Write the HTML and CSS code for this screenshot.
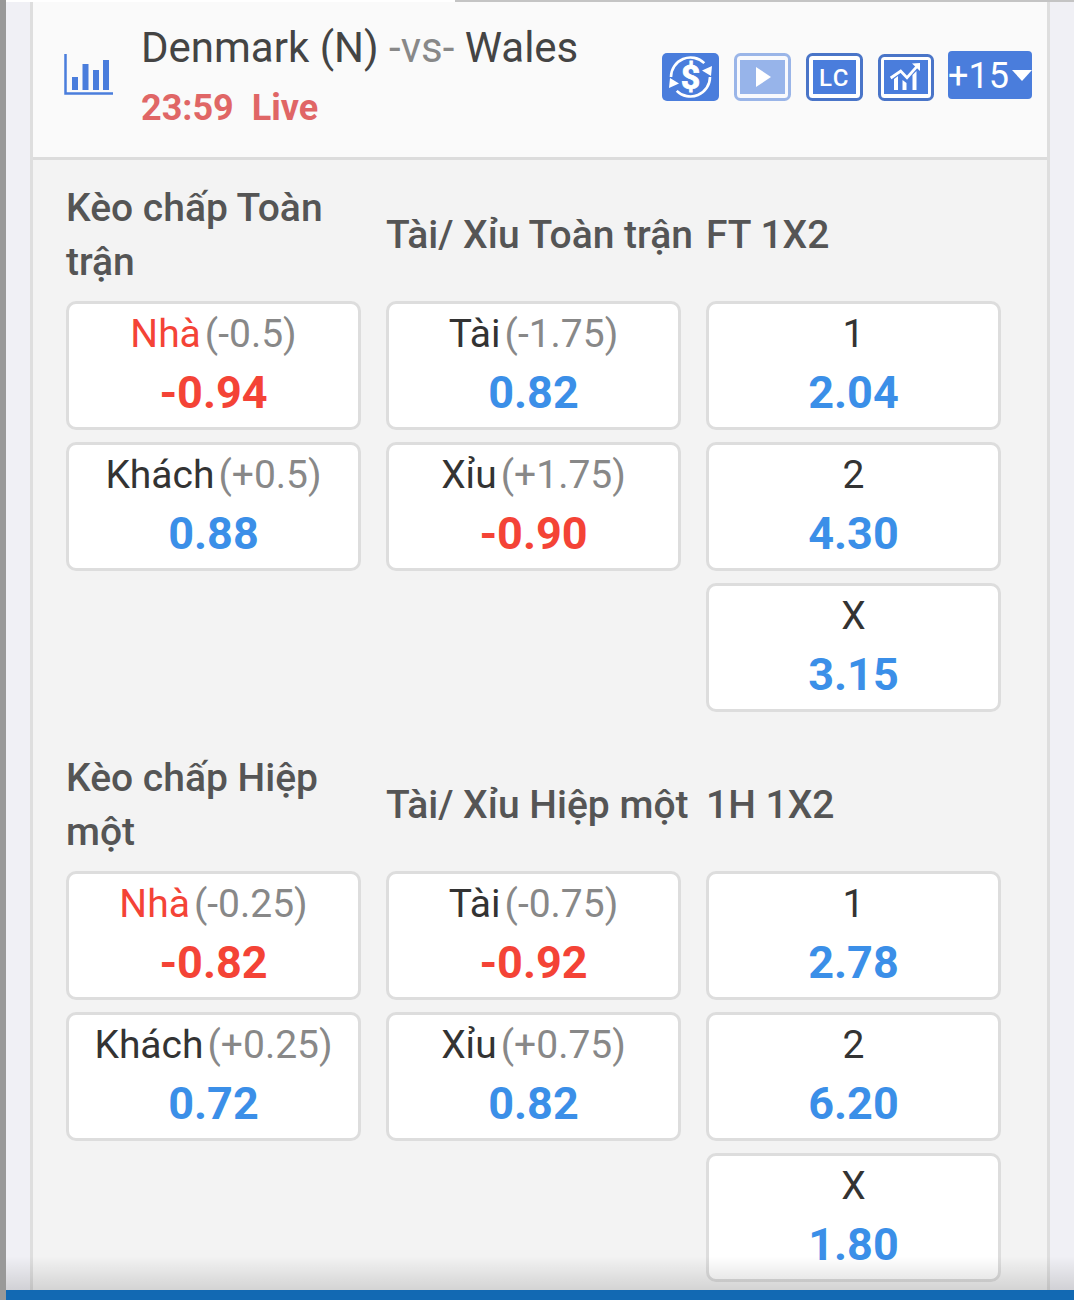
FILE: index.html
```html
<!DOCTYPE html>
<html lang="vi">
<head>
<meta charset="utf-8">
<title>Denmark vs Wales</title>
<link rel="stylesheet" href="styles.css">
</head>
<body>
<div class="screen">
  <div class="viewport">
    <div class="topline"><span class="topline-a"></span><span class="topline-b"></span></div>
    <main class="panel">
      <header class="match">
        <svg class="stats" viewBox="0 0 50 42" width="50" height="42"><path d="M1.500 0V39.500H49" fill="none" stroke="#4a7ddc" stroke-width="2.500"/><path d="M8 23h6v13H8zM18.500 10h6v26h-6zM29 16h6v20h-6zM39 6h6v30h-6z" fill="#4a7ddc"/></svg>
        <div class="teams">
          <div class="title">Denmark (N) <span class="vs">-vs-</span> Wales</div>
          <div class="status">23:59 &nbsp;Live</div>
        </div>
        <div class="tools">
          <svg class="tool" viewBox="0 0 57 48" width="57" height="48"><rect width="57" height="48" rx="5" fill="#4a7ddc"/><path d="M9 24A19.500 19.500 0 0 1 42.300 10.200M48 24A19.500 19.500 0 0 1 14.700 37.800" fill="none" stroke="#fff" stroke-width="2.600"/><path d="M50 13l-1 10-9-5.500zM7 35l1-10 9 5.500z" fill="#fff"/><text x="28.500" y="36" class="dollar">$</text></svg>
          <svg class="tool" viewBox="0 0 57 48" width="57" height="48"><rect x="1.500" y="1.500" width="54" height="45" rx="5" fill="#f8f9fd" stroke="#9ab5e8" stroke-width="3"/><rect x="6" y="7" width="45" height="34" fill="#97b4ea"/><path d="M22 14l15 10-15 10z" fill="#fff"/></svg>
          <svg class="tool" viewBox="0 0 57 48" width="57" height="48"><rect x="1.500" y="1.500" width="54" height="45" rx="5" fill="#fff" stroke="#4a75c8" stroke-width="3"/><rect x="7" y="7" width="43" height="34" fill="#4a7ddc"/><text x="28.500" y="32.500" class="lc">LC</text></svg>
          <svg class="tool tool-trend" viewBox="0 0 56 47" width="56" height="47"><rect x="1.500" y="1.500" width="53" height="44" rx="5" fill="#fff" stroke="#4a75c8" stroke-width="3"/><rect x="6" y="6" width="44" height="34" fill="#4a7ddc"/><path d="M12.700 24l10-7 6.300 6.700 10-11.400" fill="none" stroke="#fff" stroke-width="2.800"/><path d="M34 9.500l8-.5v8zM16 36V25l4-3v14zM24.500 36V26l4 3v7zM34.500 36V21l4-4v19z" fill="#fff"/></svg>
          <div class="more">+15<span class="caret"></span></div>
        </div>
      </header>

      <section class="market">
        <div class="market-grid">
          <h2 class="heading">Kèo chấp Toàn trận</h2>
          <h2 class="heading">Tài/ Xỉu Toàn trận</h2>
          <h2 class="heading">FT 1X2</h2>
          <div class="col">
            <div class="card"><div class="label"><span class="name home">Nhà</span><span class="line">(-0.5)</span></div><div class="odd neg">-0.94</div></div>
            <div class="card"><div class="label"><span class="name">Khách</span><span class="line">(+0.5)</span></div><div class="odd">0.88</div></div>
          </div>
          <div class="col">
            <div class="card"><div class="label"><span class="name">Tài</span><span class="line">(-1.75)</span></div><div class="odd">0.82</div></div>
            <div class="card"><div class="label"><span class="name">Xỉu</span><span class="line">(+1.75)</span></div><div class="odd neg">-0.90</div></div>
          </div>
          <div class="col">
            <div class="card"><div class="label"><span class="name">1</span></div><div class="odd">2.04</div></div>
            <div class="card"><div class="label"><span class="name">2</span></div><div class="odd">4.30</div></div>
            <div class="card"><div class="label"><span class="name">X</span></div><div class="odd">3.15</div></div>
          </div>
        </div>
      </section>

      <section class="market">
        <div class="market-grid">
          <h2 class="heading">Kèo chấp Hiệp một</h2>
          <h2 class="heading">Tài/ Xỉu Hiệp một</h2>
          <h2 class="heading">1H 1X2</h2>
          <div class="col">
            <div class="card"><div class="label"><span class="name home">Nhà</span><span class="line">(-0.25)</span></div><div class="odd neg">-0.82</div></div>
            <div class="card"><div class="label"><span class="name">Khách</span><span class="line">(+0.25)</span></div><div class="odd">0.72</div></div>
          </div>
          <div class="col">
            <div class="card"><div class="label"><span class="name">Tài</span><span class="line">(-0.75)</span></div><div class="odd neg">-0.92</div></div>
            <div class="card"><div class="label"><span class="name">Xỉu</span><span class="line">(+0.75)</span></div><div class="odd">0.82</div></div>
          </div>
          <div class="col">
            <div class="card"><div class="label"><span class="name">1</span></div><div class="odd">2.78</div></div>
            <div class="card"><div class="label"><span class="name">2</span></div><div class="odd">6.20</div></div>
            <div class="card"><div class="label"><span class="name">X</span></div><div class="odd">1.80</div></div>
          </div>
        </div>
      </section>
    </main>
    <div class="fade"></div>
  </div>
  <div class="bottom-bar"></div>
</div>
</body>
</html>
```
FILE: styles.css
```css
* { box-sizing: border-box; }
html, body { margin: 0; padding: 0; background: #fff; }
body { width: 1080px; height: 1300px; overflow: hidden; font-family: Roboto, "Noto Sans", sans-serif; }

.screen {
  width: 1074px;
  height: 1300px;
  border-left: 6px solid #999;
  display: flex;
  flex-direction: column;
  background: #f0f0f5;
}
.viewport {
  position: relative;
  flex: 1;
  min-height: 0;
  overflow: hidden;
  padding: 0 24px 0 24px;
}
.bottom-bar { height: 10px; flex: none; background: #1269b3; }

.topline { display: flex; height: 2px; margin: 0 -24px; }
.topline-a { width: 449px; background: #fff; }
.topline-b { flex: 1; background: #c4c4c4; }

.panel {
  width: 1020px;
  height: 1300px;
  background: #f3f3f3;
  border-left: 3px solid #dedede;
  border-right: 3px solid #dedede;
}

.match {
  height: 158px;
  background: #fafafa;
  border-bottom: 3px solid #dcdcdc;
  display: flex;
  align-items: flex-start;
  padding-left: 31px;
}
.stats { flex: none; margin-top: 52px; }
.teams { margin-left: 27px; width: 520px; flex: none; }
.title { font-size: 42px; line-height: 50px; margin-top: 21px; color: #444; white-space: nowrap; }
.vs { color: #888; }
.status { font-size: 36px; line-height: 42px; margin-top: 14px; font-weight: 700; color: #e06666; white-space: nowrap; }

.tools { display: flex; align-items: flex-start; gap: 15px; margin-left: 1px; margin-top: 49px; }
.tool { display: block; flex: none; margin-top: 2px; }
.tool-trend { margin-top: 3px; }
.dollar { font: 700 34px Roboto, sans-serif; fill: #fff; stroke: #fff; stroke-width: 0.800px; text-anchor: middle; }
.lc { font: 500 24px Roboto, sans-serif; fill: #fff; text-anchor: middle; letter-spacing: 1.500px; }
.more {
  width: 84px;
  height: 48px;
  margin-left: -1px;
  padding-top: 1px;
  background: #4a7ddc;
  border-radius: 4px;
  color: #fff;
  font-size: 36px;
  line-height: 48px;
  white-space: nowrap;
  display: flex;
  align-items: center;
  overflow: hidden;
}
.caret {
  flex: none;
  width: 0;
  height: 0;
  border-left: 10px solid transparent;
  border-right: 10px solid transparent;
  border-top: 11px solid #fff;
  margin-left: 3px;
}

.market { padding: 0 0 0 33px; margin-bottom: 39px; }
.market:nth-of-type(1) { padding-top: 21px; }
.market-grid {
  display: grid;
  grid-template-columns: repeat(3, 295px);
  grid-template-rows: 108px auto;
  column-gap: 25px;
  row-gap: 12px;
  align-items: start;
}
.heading {
  margin: 0;
  align-self: center;
  font-size: 39px;
  line-height: 54px;
  font-weight: 500;
  color: #555;
  white-space: normal;
}
.heading:nth-child(2), .heading:nth-child(3) { white-space: nowrap; }

.col { display: flex; flex-direction: column; gap: 12px; }
.card {
  height: 129px;
  background: #fff;
  border: 3px solid #ddd;
  border-radius: 10px;
  text-align: center;
}
.label { display: flex; justify-content: center; gap: 4px; font-size: 39px; line-height: 44px; margin-top: 8px; }
.name { color: #333; }
.home { color: #f44336; }
.line { color: #888; }
.odd { font-size: 45px; line-height: 50px; margin-top: 12px; font-weight: 700; color: #3b8fe8; }
.neg { color: #f44336; }

.fade {
  position: absolute;
  left: 0;
  right: 0;
  bottom: 0;
  height: 34px;
  background: linear-gradient(to bottom, rgba(0,0,0,0), rgba(0,0,0,0.13));
  pointer-events: none;
}
```
